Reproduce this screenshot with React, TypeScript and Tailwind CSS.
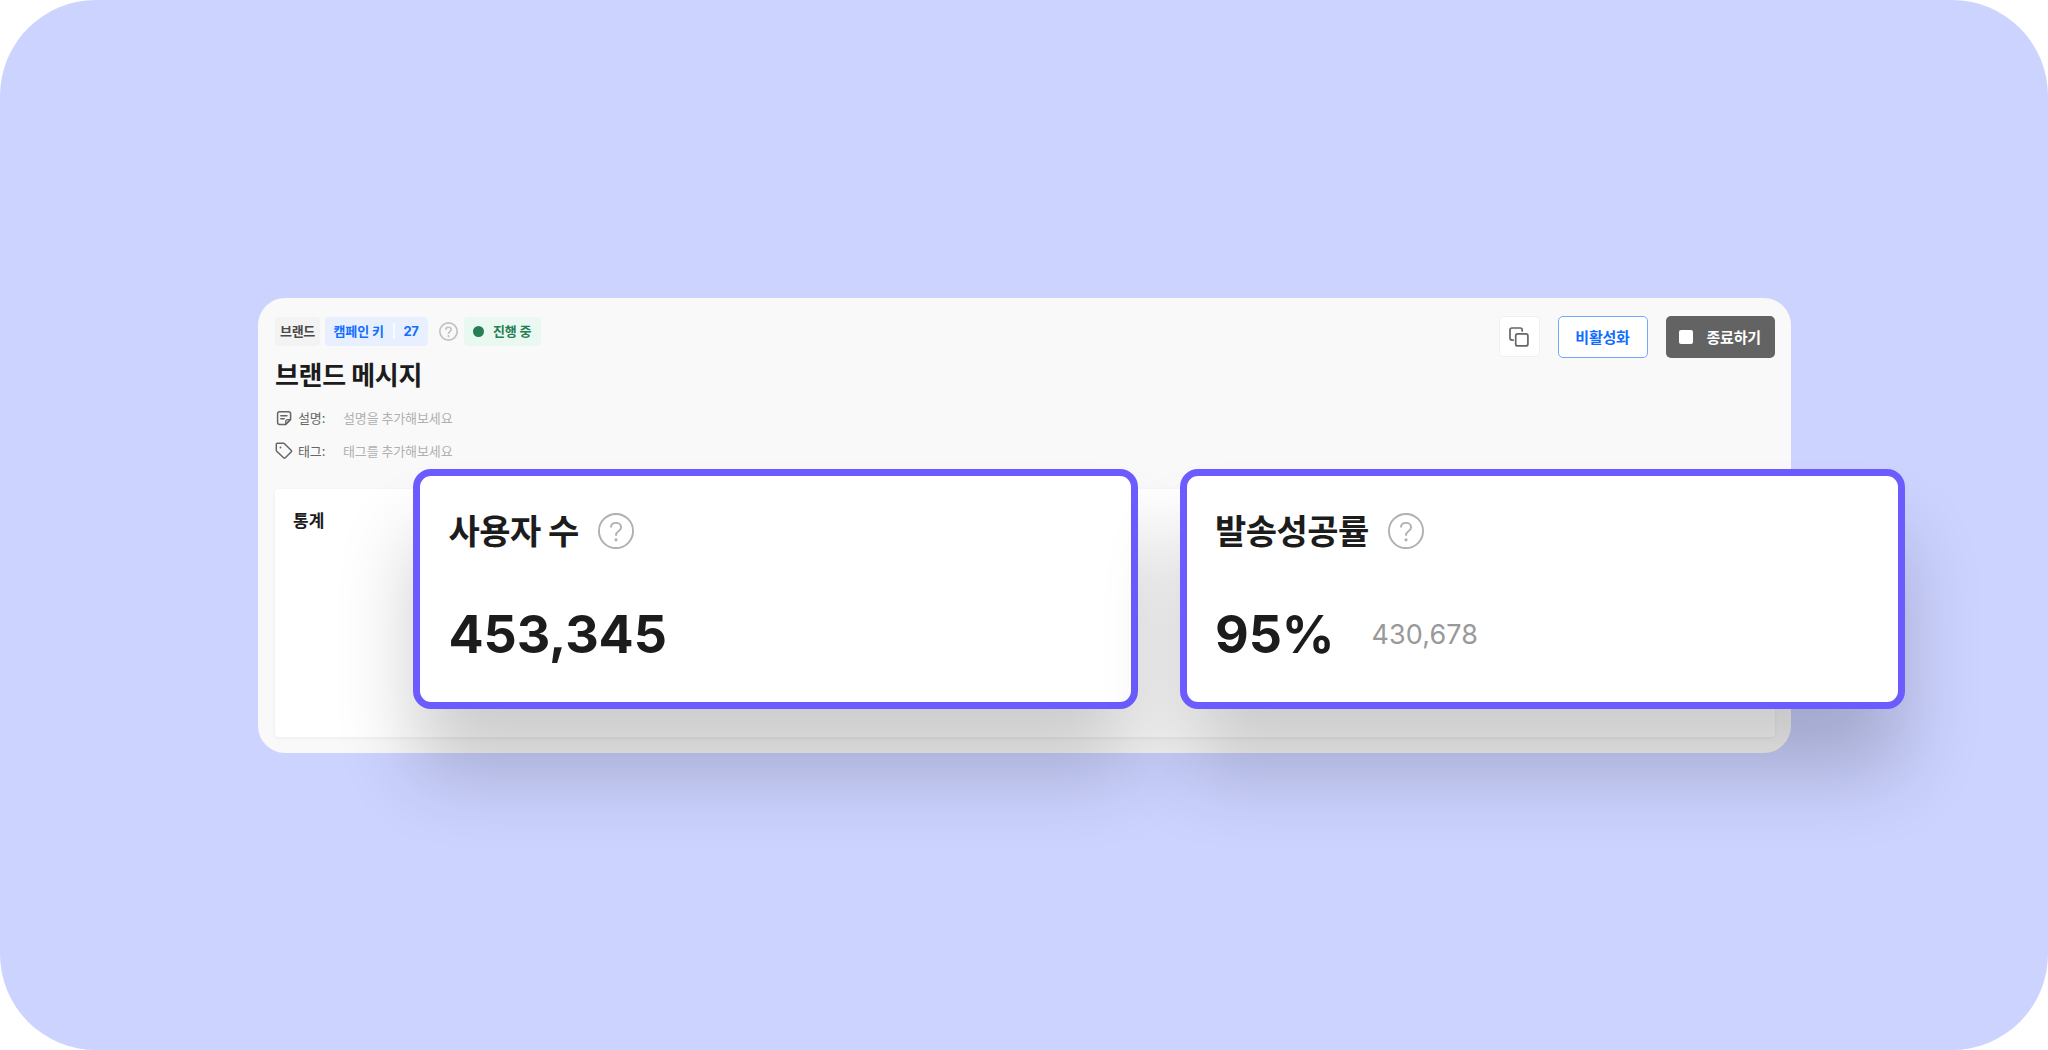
import React from 'react';

interface HelpIconProps {
  className: string;
  strokeWidth: number;
}

const HelpIcon: React.FC<HelpIconProps> = ({ className, strokeWidth }) => (
  <svg viewBox="0 0 36 36" fill="none" stroke="currentColor" strokeWidth={strokeWidth} className={className}>
    <circle cx="18" cy="18" r={18 - strokeWidth / 2} />
    <path d="M12.9 14.6c0-2.9 2.1-4.7 5.1-4.7s5.1 1.8 5.1 4.4c0 2.1-1.2 3-2.7 3.9-1.6 1-2.4 1.9-2.4 4.1v.5" />
    <circle cx="18" cy="26.8" r={strokeWidth > 2 ? 2 : 1.6} fill="currentColor" stroke="none" />
  </svg>
);

const NoteIcon = () => (
  <svg viewBox="0 0 16 16" fill="none" stroke="currentColor" strokeWidth="1.5" strokeLinecap="round" strokeLinejoin="round" className="size-4 shrink-0">
    <path d="M9.7 14.4H3.6c-1.1 0-2-.9-2-2V3.8c0-1.1.9-2 2-2h9c1.1 0 2 .9 2 2v5.7z" />
    <path d="M14.4 9.6h-2.7c-1.1 0-2 .9-2 2v2.7z" fill="currentColor" fillOpacity="0.15" strokeWidth="1.2" />
    <path d="M4.8 5.7h6.2M4.8 8.7h3.4" />
  </svg>
);

const TagIcon = () => (
  <svg viewBox="0 0 18 18" fill="none" stroke="currentColor" strokeWidth="1.5" strokeLinejoin="round" className="size-[18px] shrink-0">
    <path d="M1.3 2.3c0-.6.4-1 1-1h6.2c.4 0 .7.1 1 .4l6.6 6.6c.5.5.5 1.2 0 1.7l-5.8 5.8c-.5.5-1.2.5-1.7 0L1.7 9.2c-.3-.3-.4-.6-.4-1z" />
    <circle cx="5.5" cy="5.5" r="0.9" fill="currentColor" stroke="none" />
  </svg>
);

const CopyIcon = () => (
  <svg viewBox="0 0 20 20" fill="none" stroke="currentColor" strokeWidth="1.7" strokeLinecap="round" strokeLinejoin="round" className="size-5">
    <rect x="6.7" y="6.9" width="12.2" height="12" rx="2" />
    <path d="M4.2 13.1H3c-1.1 0-2-.9-2-2V3c0-1.1.9-2 2-2h8.2c1.1 0 2 .9 2 2v.9" />
  </svg>
);

const META = [
  { id: 'description', label: '설명:', placeholder: '설명을 추가해보세요', icon: <NoteIcon /> },
  { id: 'tag', label: '태그:', placeholder: '태그를 추가해보세요', icon: <TagIcon /> },
];

interface Stat {
  title: string;
  value: string;
  sub?: string;
}

const STATS: Stat[] = [
  { title: '사용자 수', value: '453,345' },
  { title: '발송성공률', value: '95%', sub: '430,678' },
];

const StatCard: React.FC<Stat> = ({ title, value, sub }) => (
  <div className="w-[725px] h-60 rounded-[18px] border-[7px] border-[#6c5cff] bg-white px-[28.5px] pt-[31px] shadow-[0_65px_80px_-2px_rgba(0,0,0,0.2)]">
    <div className="flex items-center h-[46px]">
      <h3 className="text-[34px] leading-[46px] font-bold tracking-[-0.5px] whitespace-nowrap">{title}</h3>
      <HelpIcon strokeWidth={1.9} className="size-9 mt-0.5 ml-[19px] text-[#b0b0b0]" />
    </div>
    <div className="flex items-center mt-[52px] h-[60px] font-['Inter',sans-serif]">
      <span className="text-[52px] leading-[60px] font-bold tracking-[-0.1px]">{value}</span>
      {sub && <span className="ml-[37px] text-[27px] text-[#999] tracking-[0.1px]">{sub}</span>}
    </div>
  </div>
);

const App: React.FC = () => {
  return (
    <div className="w-[2048px] h-[1050px] bg-white overflow-hidden font-['Noto_Sans_CJK_KR',sans-serif] text-[#1c1c1c]">
      <div className="relative h-[1049.5px] rounded-[96px] bg-[#ccd3ff] pt-[298px] pl-[258px]">
        <div className="flex flex-col w-[1532.5px] h-[455px] rounded-[27px] bg-[#f9f9f9] pl-[17px] pr-4 pb-4">
          <div className="flex justify-between h-[191px] pt-[18px]">
            <div>
              <div className="flex items-center h-[30px] text-[13px] font-bold">
                <span className="flex items-center justify-center w-[45px] h-[29px] rounded bg-[#f3f3f3] text-[#4a4a4a] tracking-[-0.3px]">브랜드</span>
                <span className="flex items-center w-[103px] h-[29px] ml-[4.5px] pl-[9px] rounded bg-[#e8f0ff] text-[#116dff]">
                  <span className="w-[51px] whitespace-nowrap tracking-[-0.1px]">캠페인 키</span>
                  <span className="w-0.5 h-4 ml-2 bg-[#f7faff]" />
                  <span className="ml-[9px] mt-0.5 font-['Inter',sans-serif] tracking-[-0.4px]">27</span>
                </span>
                <HelpIcon strokeWidth={3.2} className="size-[19px] ml-[11px] text-[#c2c2c2]" />
                <span className="flex items-center w-[77px] h-[29px] ml-[6.5px] pl-[9px] rounded bg-[#e9f9f2] text-[#277d54]">
                  <span className="size-[11px] rounded-full bg-[#277d54] mr-[9px]" />
                  <span className="whitespace-nowrap tracking-[-0.1px]">진행 중</span>
                </span>
              </div>
              <h1 className="mt-2.5 h-9 text-[26px] leading-9 font-bold tracking-[-0.35px]">브랜드 메시지</h1>
              <div className="mt-[9px]">
                {META.map(item => (
                  <div key={item.id} className="flex items-center h-[33px] text-[13px] tracking-[-0.1px] whitespace-nowrap">
                    <span className="flex items-center w-[68px] gap-1.5 text-[#666]">
                      <span className="flex justify-center w-[17px]">{item.icon}</span>
                      {item.label}
                    </span>
                    <span className="text-[#b0b0b0]">{item.placeholder}</span>
                  </div>
                ))}
              </div>
            </div>
            <div className="flex items-start text-[15px] font-bold tracking-[-0.2px]">
              <button className="flex items-center justify-center w-[41px] h-[41px] mr-[18px] rounded border border-[#f0f0f0] bg-white text-[#666]">
                <CopyIcon />
              </button>
              <button className="w-[90px] h-[41.5px] mr-[18px] rounded-[5px] border border-[#71a8ff] bg-white text-[#116dff]">비활성화</button>
              <button className="flex items-center w-[109px] h-[41.5px] pl-[13px] rounded-[5px] bg-[#636363] text-white">
                <span className="size-3.5 mr-[14px] rounded-xs bg-white" />
                <span className="whitespace-nowrap">종료하기</span>
              </button>
            </div>
          </div>
          <div className="flex-1 rounded bg-white px-[18px] pt-[18px] shadow-[0_1px_4px_rgba(0,0,0,0.06)]">
            <h2 className="text-[17px] leading-[26px] font-bold">통계</h2>
          </div>
        </div>
        {/* highlighted stats float over the panel */}
        <div className="absolute left-[413px] top-[469px] flex gap-[41.5px]">
          {STATS.map(stat => (
            <StatCard key={stat.title} {...stat} />
          ))}
        </div>
      </div>
    </div>
  );
};

export default App;
